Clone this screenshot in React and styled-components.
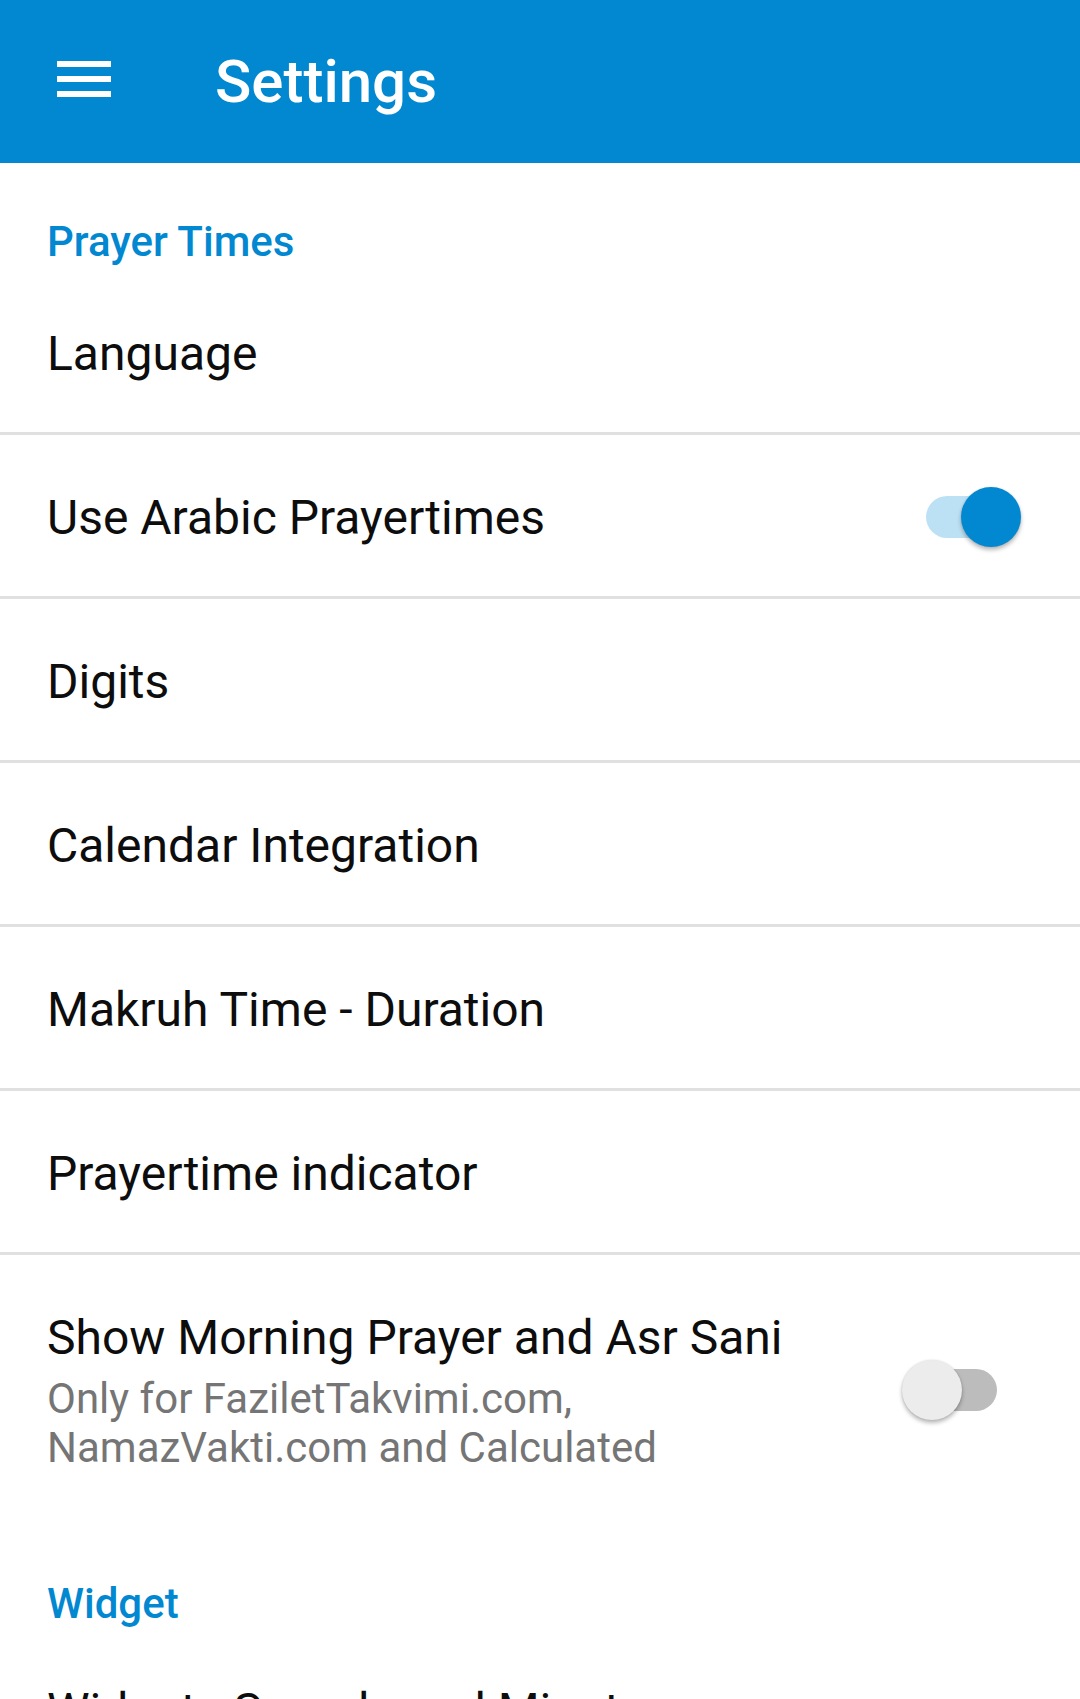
import React from 'react'
import { useState } from 'react'
import styled, { createGlobalStyle } from 'styled-components'

const GlobalStyle = createGlobalStyle`
  html, body {
    margin: 0;
    padding: 0;
    background: #fff;
    font-family: Roboto, "Noto Sans", sans-serif;
  }
`

const Screen = styled.div`
  width: 1080px;
  height: 1699px;
  overflow: hidden;
  background: #fff;
`

const Toolbar = styled.header`
  height: 163px;
  background: #0288d1;
  display: flex;
  align-items: center;
  padding-left: 57px;
`

const MenuButton = styled.svg`
  width: 54px;
  height: 36px;
  margin-top: -5px;
  flex-shrink: 0;
`

const Title = styled.h1`
  margin: 0 0 0 104px;
  font-size: 60px;
  font-weight: 500;
  color: #fff;
`

const Category = styled.div`
  height: 108px;
  box-sizing: border-box;
  padding: 54px 0 0 47px;
  font-size: 42px;
  font-weight: 500;
  color: #0288d1;
`

const Row = styled.div`
  display: flex;
  align-items: center;
  min-height: ${(p) => (p.$tall ? '270px' : '164px')};
  box-sizing: border-box;
  padding: ${(p) => (p.$tall ? `${p.$top || 53}px 59px 53px 47px` : '3px 59px 0 47px')};
  border-bottom: ${(p) => (p.$last ? 'none' : '3px solid #e0e0e0')};
`

const TextBlock = styled.div`
  width: 760px;
  margin-right: auto;
  align-self: ${(p) => (p.$top ? 'flex-start' : 'auto')};
`

const RowTitle = styled.div`
  font-size: 48px;
  color: #0d0d0d;
`

const Summary = styled.div`
  margin-top: 8px;
  font-size: 42px;
  color: #757575;
`

const SwitchBox = styled.div`
  position: relative;
  width: 119px;
  height: 60px;
  flex-shrink: 0;
  cursor: pointer;
`

const Track = styled.div`
  position: absolute;
  left: 24px;
  top: 9px;
  width: 71px;
  height: 42px;
  border-radius: 21px;
  background: ${(p) => (p.$on ? '#bde1f4' : '#bcbcbc')};
`

const Thumb = styled.div`
  position: absolute;
  top: 0;
  left: ${(p) => (p.$on ? '59px' : '0')};
  width: 60px;
  height: 60px;
  border-radius: 50%;
  background: ${(p) => (p.$on ? '#0288d1' : '#ececec')};
  box-shadow: 0 3px 4px rgba(0, 0, 0, 0.28), 0 0 2px rgba(0, 0, 0, 0.12);
`

const Toggle = ({ on, onChange }) => (
  <SwitchBox onClick={() => onChange(!on)}>
    <Track $on={on} />
    <Thumb $on={on} />
  </SwitchBox>
)

const Pref = ({ title, summary, children, last, top }) => (
  <Row $tall={!!summary} $last={last} $top={top}>
    <TextBlock $top={top}>
      <RowTitle>{title}</RowTitle>
      {summary && <Summary>{summary}</Summary>}
    </TextBlock>
    {children}
  </Row>
)

const App = () => {
  const [arabic, setArabic] = useState(true)
  const [morning, setMorning] = useState(false)

  return (
    <Screen>
      <GlobalStyle />
      <Toolbar>
        <MenuButton viewBox="0 0 54 36">
          <rect x="0" y="0" width="54" height="6" fill="#fff" />
          <rect x="0" y="15" width="54" height="6" fill="#fff" />
          <rect x="0" y="30" width="54" height="6" fill="#fff" />
        </MenuButton>
        <Title>Settings</Title>
      </Toolbar>

      <Category>Prayer Times</Category>
      <Pref title="Language" />
      <Pref title="Use Arabic Prayertimes">
        <Toggle on={arabic} onChange={setArabic} />
      </Pref>
      <Pref title="Digits" />
      <Pref title="Calendar Integration" />
      <Pref title="Makruh Time - Duration" />
      <Pref title="Prayertime indicator" />
      <Pref
        title="Show Morning Prayer and Asr Sani"
        summary="Only for FaziletTakvimi.com, NamazVakti.com and Calculated"
        last
      >
        <Toggle on={morning} onChange={setMorning} />
      </Pref>

      <Category>Widget</Category>
      <Pref title="Widget - Sounds and Minutes" summary="Show remaining time" top={49} />
    </Screen>
  )
}

export default App
